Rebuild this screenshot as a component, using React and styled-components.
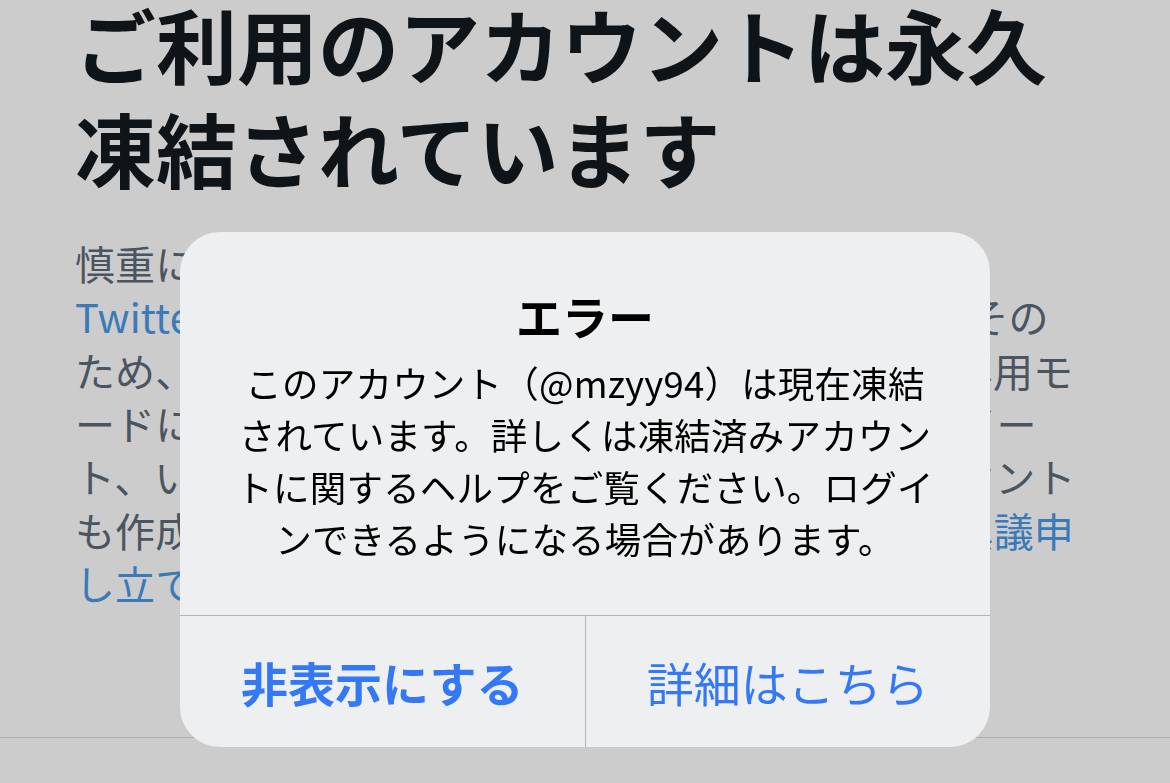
import styled, { createGlobalStyle } from "styled-components";

const GlobalStyle = createGlobalStyle`
  html, body {
    margin: 0;
    padding: 0;
    background: #cccccc;
  }
  body {
    font-family: "Noto Sans CJK JP", "Noto Sans", sans-serif;
    overflow: hidden;
  }
`;

const Page = styled.div`
  width: 1170px;
  height: 783px;
  background: #cccccc;
  overflow: hidden;
`;

const Article = styled.section`
  padding: 0 0 127px 75px;
  border-bottom: 1px solid #a9b0b6;
`;

const Heading = styled.h1`
  margin: -9px 0 0;
  font-size: 81px;
  line-height: 104px;
  font-weight: 700;
  color: #0f1419;
  white-space: nowrap;
`;

const Body = styled.p`
  margin: 38px 0 0;
  font-size: 40px;
  line-height: 53.33px;
  letter-spacing: 0.1px;
  color: #4b5561;
  white-space: nowrap;
`;

const Link = styled.span`
  color: #3a7ab8;
`;

const Alert = styled.div`
  position: fixed;
  left: 180px;
  top: 232px;
  width: 810px;
  border-radius: 40px;
  background: #eeeff0;
  overflow: hidden;
  display: flex;
  flex-direction: column;
`;

const AlertBody = styled.div`
  padding: 55px 0 50px;
  text-align: center;
  color: #000;
`;

const AlertTitle = styled.h2`
  margin: 0;
  font-size: 46px;
  line-height: 56px;
  font-weight: 700;
`;

const AlertMessage = styled.p`
  margin: 14px 0 0;
  font-size: 36.5px;
  line-height: 52px;
  letter-spacing: 0.2px;
  font-weight: 400;
  white-space: nowrap;
`;

const Actions = styled.div`
  display: flex;
  height: 131px;
  border-top: 1px solid #b4b4b6;
`;

const Action = styled.button`
  flex: 1;
  border: none;
  background: transparent;
  padding: 0;
  font-family: inherit;
  font-size: 47px;
  font-weight: ${(p) => (p.$primary ? 700 : 400)};
  color: #3478f6;
  display: flex;
  align-items: center;
  justify-content: center;

  & + & {
    border-left: 1px solid #b4b4b6;
  }
`;

export default function App() {
  return (
    <Page>
      <GlobalStyle />
      <Article>
        <Heading>
          ご利用のアカウントは永久
          <br />
          凍結されています
        </Heading>
        <Body>
          慎重に調査した結果、お使いのアカウントが
          <br />
          <Link>Twitterルール</Link>に違反していると判断されました。その
          <br />
          ため、お使いのアカウントは今後すべて読み取り専用モ
          <br />
          ードに切り替わりました。今後、ツイート、リツイー
          <br />
          ト、いいね、フォローはできません。新しいアカウント
          <br />
          も作成できません。誤りであると思われる場合は<Link>異議申</Link>
          <br />
          <Link>し立て</Link>ができます。
        </Body>
      </Article>
      <Alert role="alertdialog">
        <AlertBody>
          <AlertTitle>エラー</AlertTitle>
          <AlertMessage>
            このアカウント（@mzyy94）は現在凍結
            <br />
            されています。詳しくは凍結済みアカウン
            <br />
            トに関するヘルプをご覧ください。ログイ
            <br />
            ンできるようになる場合があります。
          </AlertMessage>
        </AlertBody>
        <Actions>
          <Action $primary>非表示にする</Action>
          <Action>詳細はこちら</Action>
        </Actions>
      </Alert>
    </Page>
  );
}
